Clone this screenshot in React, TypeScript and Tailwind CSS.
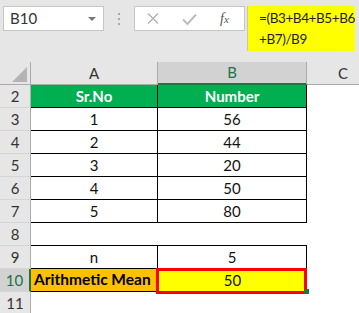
import React from 'react';

const font = 'font-[family-name:Lato,sans-serif]';

type Row = {
  n: number;
  a?: string;
  b?: string;
  kind: 'head' | 'data' | 'gap' | 'plain' | 'mean' | 'empty';
};

const rows: Row[] = [
  { n: 2, a: 'Sr.No', b: 'Number', kind: 'head' },
  { n: 3, a: '1', b: '56', kind: 'data' },
  { n: 4, a: '2', b: '44', kind: 'data' },
  { n: 5, a: '3', b: '20', kind: 'data' },
  { n: 6, a: '4', b: '50', kind: 'data' },
  { n: 7, a: '5', b: '80', kind: 'data' },
  { n: 8, kind: 'gap' },
  { n: 9, a: 'n', b: '5', kind: 'plain' },
  { n: 10, a: 'Arithmetic Mean', b: '50', kind: 'mean' },
  { n: 11, kind: 'empty' },
];

const SheetRow: React.FC<{ row: Row }> = ({ row }) => {
  const selected = row.kind === 'mean';
  const header = selected
    ? 'bg-[#d2d2d2] text-[#217346] border-r-2 border-r-[#217346]'
    : 'bg-[#e6e6e6] text-[#333] border-r border-r-[#ababab]';

  let aCls = 'w-[127px]';
  let bCls = 'w-[149px]';
  if (row.kind === 'head') {
    aCls += ' bg-[#00b050] text-white font-bold border-r border-b border-black justify-center';
    bCls += ' bg-[#00b050] text-white font-bold border-r border-b border-black justify-center';
  } else if (row.kind === 'data' || row.kind === 'plain') {
    aCls += ' border-r border-b border-black justify-center text-[#111]';
    bCls += ' border-r border-b border-black justify-center text-[#111]';
  } else if (row.kind === 'gap') {
    aCls += ' border-b border-black';
    bCls += ' border-b border-black';
  } else if (row.kind === 'mean') {
    aCls += ' bg-[#ffc000] border-r border-b border-black font-bold text-black text-[15.5px] pl-[3px] whitespace-nowrap';
    bCls += ' bg-[#ffff00] justify-center text-[#111] relative';
  }

  return (
    <div className="flex h-[23px] text-[15px]">
      <div
        className={`w-[31px] shrink-0 flex items-center justify-center border-b border-b-[#d5d5d5] ${header}`}
      >
        {row.n}
      </div>
      <div className={`shrink-0 flex items-center ${aCls}`}>{row.a}</div>
      <div className={`shrink-0 flex items-center ${bCls}`}>
        {row.b}
        {selected && (
          <>
            <div className="absolute -left-[2px] -top-[1px] w-[151px] h-[26px] border-[3px] border-[#ff0000]" />
            <div className="absolute left-[146px] top-[20px] w-[5px] h-[5px] bg-[#217346]" />
          </>
        )}
      </div>
      <div className="w-[72px] shrink-0" />
    </div>
  );
};

export default function App() {
  return (
    <div className={`w-[359px] h-[313px] overflow-hidden bg-white ${font}`}>
      {/* formula bar */}
      <div className="h-[62px] bg-[#e6e6e6] flex items-start pt-[6px]">
        <div className="ml-[3px] w-[101px] h-[25px] bg-white border border-[#c6c6c6] flex items-center justify-between pl-[6px] pr-[7px] text-[15px] text-[#333]">
          <span>B10</span>
          <svg width="8" height="4" viewBox="0 0 8 4">
            <path d="M0 0H8L4 4Z" fill="#777" />
          </svg>
        </div>
        <div className="ml-[14px] mt-[7px] flex flex-col gap-[3px]">
          <span className="w-[2px] h-[2px] bg-[#a8a8a8]" />
          <span className="w-[2px] h-[2px] bg-[#a8a8a8]" />
          <span className="w-[2px] h-[2px] bg-[#a8a8a8]" />
        </div>
        <div className="ml-[14px] w-[111px] h-[25px] bg-white border border-[#c6c6c6] flex items-center">
          <svg className="ml-[12px]" width="12" height="11" viewBox="0 0 12 11">
            <path d="M1 0.5L11 10.5M11 0.5L1 10.5" stroke="#b0b0b0" strokeWidth="1.3" />
          </svg>
          <svg className="ml-[23px]" width="15" height="12" viewBox="0 0 15 12">
            <path d="M1 6.5L5.5 11L14 1.5" stroke="#bdbdbd" strokeWidth="2" fill="none" />
          </svg>
          <span className="ml-[23px] font-[family-name:Liberation_Serif,serif] italic text-[14px] text-[#555]">
            f<span className="text-[11px]">x</span>
          </span>
        </div>
        <div className="ml-[2px] w-[108px] h-[45px] overflow-hidden whitespace-nowrap bg-[#ffff00] border-l border-[#c6c6c6] pl-[11px] pt-[2px] text-[13.5px] tracking-[-0.4px] leading-[21px] text-[#222]">
          =(B3+B4+B5+B6
          <br />
          +B7)/B9
        </div>
      </div>

      {/* column headers */}
      <div className="flex h-[23px] text-[15px] text-[#333]">
        <div className="w-[31px] shrink-0 bg-[#e6e6e6] border-r border-b border-[#ababab] flex items-end justify-end pr-[3px] pb-[2px]">
          <svg width="15" height="15" viewBox="0 0 15 15">
            <path d="M15 0V15H0Z" fill="#b4b4b4" />
          </svg>
        </div>
        <div className="w-[127px] shrink-0 bg-[#e6e6e6] border-r border-b border-[#ababab] flex items-center justify-center">
          A
        </div>
        <div className="w-[149px] shrink-0 bg-[#d2d2d2] border-r border-r-[#ababab] border-b-2 border-b-[#217346] flex items-center justify-center text-[#217346]">
          B
        </div>
        <div className="w-[72px] shrink-0 bg-[#e6e6e6] border-b border-[#ababab] flex items-center justify-center">
          C
        </div>
      </div>

      {rows.map((r) => (
        <SheetRow key={r.n} row={r} />
      ))}
    </div>
  );
}
